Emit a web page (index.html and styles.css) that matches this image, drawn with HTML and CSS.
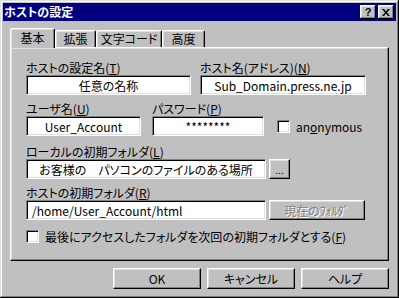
FILE: index.html
```html
<!DOCTYPE html>
<html lang="ja">
<head>
  <meta charset="UTF-8">
  <title>ホストの設定</title>
  <link rel="stylesheet" href="styles.css">
</head>
<body>
  <div class="window">
    <div class="titlebar">
      <span class="title">ホストの設定</span>
      <div class="title-buttons">
        <div class="tbtn help">?</div>
        <div class="tbtn">
          <svg width="8" height="7" viewBox="0 0 8 7"><path d="M0 0h2l2 2.5L6 0h2L5 3.5 8 7H6L4 4.5 2 7H0l3-3.5z" fill="#000"/></svg>
        </div>
      </div>
    </div>

    <div class="content">
      <div class="tabs">
        <div class="tab active w1">基本</div>
        <div class="tab w2">拡張</div>
        <div class="tab w3">文字コード</div>
        <div class="tab w4">高度</div>
      </div>

      <div class="panel">
        <div class="group">
          <div class="field" style="width:165px">
            <label>ホストの設定名(<u>T</u>)</label>
            <div class="input center">任意の名称</div>
          </div>
          <div class="field" style="width:166px">
            <label>ホスト名(アドレス)(<u>N</u>)</label>
            <div class="input center">Sub_Domain.press.ne.jp</div>
          </div>
        </div>

        <div class="group">
          <div class="field" style="width:115px">
            <label>ユーザ名(<u>U</u>)</label>
            <div class="input center">User_Account</div>
          </div>
          <div class="field gap-pass" style="width:112px">
            <label>パスワード(<u>P</u>)</label>
            <div class="input center">********</div>
          </div>
          <div class="check anon">
            <span class="box"></span>
            <span>an<u>o</u>nymous</span>
          </div>
        </div>

        <div class="group">
          <div class="field" style="width:240px">
            <label>ローカルの初期フォルダ(<u>L</u>)</label>
            <div class="input center">お客様の　パソコンのファイルのある場所</div>
          </div>
          <div class="button small">...</div>
        </div>

        <div class="group">
          <div class="field" style="width:240px">
            <label>ホストの初期フォルダ(<u>R</u>)</label>
            <div class="input left">/home/User_Account/html</div>
          </div>
          <div class="button wide disabled">現在のﾌｫﾙﾀﾞ</div>
        </div>

        <div class="check last">
          <span class="box"></span>
          <span>最後にアクセスしたフォルダを次回の初期フォルダとする(<u>F</u>)</span>
        </div>
      </div>

      <div class="actions">
        <div class="button action">OK</div>
        <div class="button action">キャンセル</div>
        <div class="button action">ヘルプ</div>
      </div>
    </div>
  </div>
</body>
</html>
```

FILE: styles.css
```css
body {
  margin: 0;
  background: #c0c0c0;
  font-family: "Noto Sans CJK JP", "Liberation Sans", sans-serif;
  font-size: 12px;
  font-feature-settings: "palt";
  color: #000;
}

.window {
  width: 399px;
  height: 298px;
  box-sizing: border-box;
  padding: 3px;
  background: #c0c0c0;
  box-shadow: inset -1px -1px #000, inset 1px 1px #dfdfdf, inset -2px -2px #808080, inset 2px 2px #fff;
}

.titlebar {
  height: 18px;
  background: #000080;
  color: #fff;
  display: flex;
  align-items: center;
  justify-content: space-between;
  padding: 0 2px 0 1px;
}

.title {
  font-weight: bold;
  font-size: 12px;
  line-height: 18px;
}

.title-buttons {
  display: flex;
  gap: 2px;
}

.tbtn {
  width: 16px;
  height: 14px;
  background: #c0c0c0;
  box-shadow: inset -1px -1px #000, inset 1px 1px #fff, inset -2px -2px #808080, inset 2px 2px #dfdfdf;
  display: flex;
  align-items: center;
  justify-content: center;
  color: #000;
}

.tbtn.help {
  font-family: "Liberation Sans", sans-serif;
  font-weight: bold;
  font-size: 11px;
  line-height: 14px;
}

.content {
  padding: 7px 7px 0 7px;
}

.tabs {
  display: flex;
  align-items: flex-end;
  height: 19px;
}

.tab {
  height: 17px;
  box-sizing: border-box;
  border-top: 1px solid #fff;
  border-left: 1px solid #fff;
  border-right: 1px solid #000;
  border-radius: 2px 2px 0 0;
  box-shadow: inset -1px 0 #808080, inset 1px 1px #dfdfdf;
  background: #c0c0c0;
  text-align: center;
  line-height: 15px;
}

.tab.active {
  height: 20px;
  margin-bottom: -1px;
  position: relative;
  z-index: 1;
  line-height: 17px;
}

.w1 { width: 45px; }
.w2 { width: 41px; }
.w3 { width: 66px; }
.w4 { width: 43px; }

.panel {
  width: 379px;
  height: 214px;
  box-sizing: border-box;
  border: 1px solid;
  border-color: #fff #000 #000 #fff;
  box-shadow: inset -1px -1px #808080, inset 1px 1px #dfdfdf;
  padding: 12px 0 0 15px;
}

.group {
  display: flex;
  align-items: flex-end;
  gap: 9px;
  margin-bottom: 6px;
}

.group:nth-child(2) {
  margin-bottom: 8px;
}

.field label {
  display: block;
  height: 15px;
  line-height: 15px;
  white-space: nowrap;
}

.input {
  height: 20px;
  box-sizing: border-box;
  background: #fff;
  border: 1px solid;
  border-color: #808080 #fff #fff #808080;
  box-shadow: inset 1px 1px #000, inset -1px -1px #dfdfdf;
  display: flex;
  align-items: center;
  white-space: nowrap;
  overflow: hidden;
}

.input.center {
  justify-content: center;
}

.input.left {
  padding-left: 5px;
}

.gap-pass {
  margin-left: 2px;
}

.check {
  display: flex;
  align-items: center;
  gap: 6px;
  white-space: nowrap;
}

.check .box {
  width: 13px;
  height: 13px;
  box-sizing: border-box;
  background: #fff;
  border: 1px solid;
  border-color: #808080 #fff #fff #808080;
  box-shadow: inset 1px 1px #000, inset -1px -1px #dfdfdf;
}

.anon {
  height: 20px;
  margin-left: 4px;
}

.last {
  margin-top: 8px;
}

.button {
  height: 20px;
  box-sizing: border-box;
  background: #c0c0c0;
  border: 1px solid;
  border-color: #fff #000 #000 #fff;
  box-shadow: inset -1px -1px #808080, inset 1px 1px #dfdfdf;
  display: flex;
  align-items: center;
  justify-content: center;
  white-space: nowrap;
}

.group .button {
  margin-left: -6px;
}

.button.small {
  width: 21px;
  font-size: 10px;
}

.button.wide {
  width: 96px;
}

.button.disabled {
  color: #808080;
  text-shadow: 1px 1px #fff;
}

.actions {
  display: flex;
  justify-content: flex-end;
  gap: 6px;
  margin-top: 7px;
}

.button.action {
  width: 88px;
  height: 21px;
}
```
